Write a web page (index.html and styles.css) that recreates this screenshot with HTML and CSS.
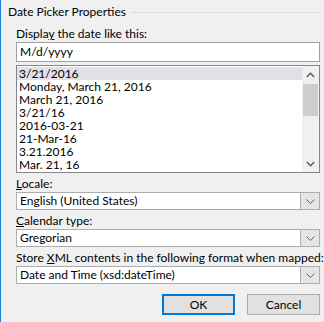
FILE: index.html
```html
<!DOCTYPE html>
<html lang="en">
<head>
    <meta charset="UTF-8">
    <title>Date Picker Properties</title>
    <link rel="stylesheet" href="styles.css">
</head>
<body>
    <div class="dialog">
        <div class="group-title">
            <span>Date Picker Properties</span>
            <div class="rule"></div>
        </div>

        <div class="group">
            <label class="field-label first">Displa<u>y</u> the date like this:</label>
            <div class="textbox">M/d/yyyy</div>

            <div class="listbox">
                <ul class="items">
                    <li class="selected">3/21/2016</li>
                    <li>Monday, March 21, 2016</li>
                    <li>March 21, 2016</li>
                    <li>3/21/16</li>
                    <li>2016-03-21</li>
                    <li>21-Mar-16</li>
                    <li>3.21.2016</li>
                    <li>Mar. 21, 16</li>
                </ul>
                <div class="scrollbar">
                    <div class="arrow">
                        <svg width="9" height="6" viewBox="0 0 9 6"><polyline points="0.8,5 4.5,1.3 8.2,5" fill="none" stroke="#606060" stroke-width="1.6"/></svg>
                    </div>
                    <div class="track">
                        <div class="thumb"></div>
                    </div>
                    <div class="arrow">
                        <svg width="9" height="6" viewBox="0 0 9 6"><polyline points="0.8,1 4.5,4.7 8.2,1" fill="none" stroke="#606060" stroke-width="1.6"/></svg>
                    </div>
                </div>
            </div>

            <label class="field-label"><u>L</u>ocale:</label>
            <div class="combo">
                <span class="combo-text">English (United States)</span>
                <span class="combo-btn">
                    <svg width="9" height="5" viewBox="0 0 9 5"><polyline points="0.5,0.5 4.5,4.5 8.5,0.5" fill="none" stroke="#606060" stroke-width="1"/></svg>
                </span>
            </div>

            <label class="field-label"><u>C</u>alendar type:</label>
            <div class="combo">
                <span class="combo-text">Gregorian</span>
                <span class="combo-btn">
                    <svg width="9" height="5" viewBox="0 0 9 5"><polyline points="0.5,0.5 4.5,4.5 8.5,0.5" fill="none" stroke="#606060" stroke-width="1"/></svg>
                </span>
            </div>

            <label class="field-label">Store <u>X</u>ML contents in the following format when mapped:</label>
            <div class="combo">
                <span class="combo-text">Date and Time (xsd:dateTime)</span>
                <span class="combo-btn">
                    <svg width="9" height="5" viewBox="0 0 9 5"><polyline points="0.5,0.5 4.5,4.5 8.5,0.5" fill="none" stroke="#606060" stroke-width="1"/></svg>
                </span>
            </div>
        </div>

        <div class="buttons">
            <button class="btn default">OK</button>
            <button class="btn">Cancel</button>
        </div>
    </div>
</body>
</html>
```

FILE: styles.css
```css
* {
    box-sizing: border-box;
    margin: 0;
    padding: 0;
}
body {
    width: 324px;
    height: 322px;
    overflow: hidden;
    background: #f0f0f0;
    font-family: Lato, sans-serif;
    font-size: 12px;
    color: #000;
}
.dialog {
    height: 322px;
    border-left: 1px solid #1883d7;
    padding-right: 4px;
}
.group-title {
    display: flex;
    align-items: center;
    gap: 5px;
    height: 25px;
    padding: 4px 0 5px 7px;
    line-height: 16px;
    white-space: nowrap;
}
.rule {
    flex: 1;
    border-top: 1px solid #dcdcdc;
}
.group {
    display: flex;
    flex-direction: column;
    padding-left: 15px;
}
.field-label {
    display: block;
    height: 17px;
    line-height: 17px;
    margin-top: 2px;
    white-space: nowrap;
}
.field-label.first {
    height: 16px;
    line-height: 15px;
    margin-top: 1px;
}
.textbox {
    height: 20px;
    line-height: 17px;
    padding-left: 3px;
    background: #fff;
    border: 1px solid #a0a0a0;
}
.listbox {
    display: flex;
    height: 108px;
    margin-top: 3px;
    background: #fff;
    border: 1px solid #828790;
}
.items {
    flex: 1;
    list-style: none;
    padding-top: 1px;
    overflow: hidden;
}
.items li {
    height: 13px;
    line-height: 13px;
    padding-left: 2px;
    white-space: nowrap;
}
.items li.selected {
    background: #e0e0e6;
}
.scrollbar {
    display: flex;
    flex-direction: column;
    width: 17px;
    background: #f0f0f0;
}
.arrow {
    display: flex;
    align-items: center;
    justify-content: center;
    height: 17px;
}
.track {
    flex: 1;
}
.thumb {
    height: 32px;
    margin: 1px 1px 0;
    background: #cdcdcd;
}
.combo {
    display: flex;
    height: 18px;
    background: #fff;
    border: 1px solid #adadad;
}
.combo-text {
    flex: 1;
    line-height: 15px;
    padding-left: 3px;
    white-space: nowrap;
    overflow: hidden;
}
.combo-btn {
    display: flex;
    align-items: center;
    justify-content: center;
    width: 19px;
    background: #e5e5e5;
    border-left: 1px solid #adadad;
}
.buttons {
    display: flex;
    justify-content: flex-end;
    gap: 12px;
    margin-top: 10px;
}
.btn {
    width: 73px;
    height: 21px;
    font-family: Lato, sans-serif;
    font-size: 12px;
    color: #000;
    background: #e1e1e1;
    border: 1px solid #adadad;
}
.btn.default {
    border: 2px solid #0078d7;
}
```
